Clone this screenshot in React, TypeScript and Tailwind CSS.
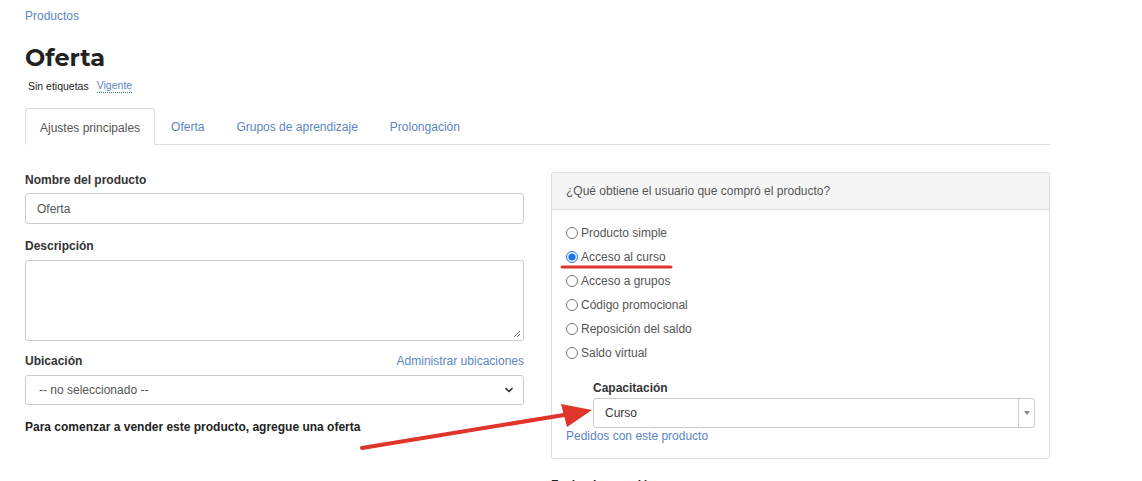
import { ChevronDown } from "lucide-react";

const options = [
  "Producto simple",
  "Acceso al curso",
  "Acceso a grupos",
  "Código promocional",
  "Reposición del saldo",
  "Saldo virtual",
];

const tabs = ["Ajustes principales", "Oferta", "Grupos de aprendizaje", "Prolongación"];

export default function App() {
  return (
    <div className="relative h-[481px] w-[1142px] overflow-hidden bg-white font-['Liberation_Sans',Arial,sans-serif] text-[12px] text-[#333]">
      <div className="w-[1050px] pl-[25px]">
        {/* Header */}
        <div className="pt-[8px] text-[12px] leading-[16px] text-[#5b86c5]">Productos</div>
        <h1 className="mt-[19px] font-['Montserrat','Lato',sans-serif] text-[24px] font-bold leading-[30px] text-[#222]">Oferta</h1>
        <div className="mt-[5px] flex items-center gap-[8px] pl-[3px] text-[10.5px] leading-[14px]">
          <span className="text-[#222]">Sin etiquetas</span>
          <span className="border-b border-dotted border-[#2a6fc9] text-[#5b86c5]">Vigente</span>
        </div>

        {/* Tabs */}
        <div className="mt-[15px] flex h-[37px] border-b border-[#ddd] text-[12px]">
          {tabs.map((t, i) => (
            <div
              key={t}
              className={
                i === 0
                  ? "-mb-px flex items-center rounded-t-[3px] border border-b-white border-[#ddd] bg-white px-[14px] pt-[2px] text-[#555]"
                  : "flex items-center px-[16px] pt-[2px] text-[#5b86c5]"
              }
            >
              {t}
            </div>
          ))}
        </div>

        <div className="mt-[27px] grid grid-cols-[499px_499px] gap-[27px]">
          {/* Left column */}
          <div className="flex flex-col">
            <label className="font-bold leading-[16px] text-[#333]">Nombre del producto</label>
            <div className="mt-[5px] flex h-[31px] items-center rounded-[3px] border border-[#ccc] px-[11px] text-[#555]">Oferta</div>

            <label className="mt-[14px] font-bold leading-[16px]">Descripción</label>
            <div className="relative mt-[6px] h-[81px] rounded-[3px] border border-[#ccc]">
              <svg className="absolute bottom-[2px] right-[2px]" width="8" height="8" viewBox="0 0 8 8">
                <path d="M1 7 L7 1 M4 7 L7 4" stroke="#777" strokeWidth="1" />
              </svg>
            </div>

            <div className="mt-[12px] flex items-center justify-between leading-[16px]">
              <span className="font-bold">Ubicación</span>
              <span className="text-[#5b86c5]">Administrar ubicaciones</span>
            </div>
            <div className="mt-[6px] flex h-[30px] items-center justify-between rounded-[3px] border border-[#ccc] pl-[13px] pr-[8px] text-[#555]">
              <span>-- no seleccionado --</span>
              <ChevronDown className="h-[12px] w-[12px] text-[#333]" strokeWidth={3.5} />
            </div>

            <div className="mt-[14px] font-bold leading-[16px] text-[#222]">Para comenzar a vender este producto, agregue una oferta</div>
          </div>

          {/* Right column */}
          <div className="flex flex-col">
            <div className="rounded-[2px] border border-[#ddd]">
              <div className="flex h-[37px] items-center border-b border-[#ddd] bg-[#f5f5f5] px-[14px] text-[#555]">
                ¿Qué obtiene el usuario que compró el producto?
              </div>
              <div className="px-[14px] pb-[14px] pt-[11px]">
                <div className="flex flex-col">
                  {options.map((o, i) => (
                    <label key={o} className="flex h-[24px] items-center gap-[3px] text-[#555]">
                      <input type="radio" name="tipo" defaultChecked={i === 1} className="m-0 h-[12px] w-[12px] accent-[#1a73e8]" />
                      <span>{o}</span>
                    </label>
                  ))}
                </div>
                <div className="mt-[15px] pl-[27px]">
                  <div className="font-bold leading-[16px] text-[#333]">Capacitación</div>
                  <div className="mt-[2px] flex h-[30px] items-stretch rounded-[3px] border border-[#ccc]">
                    <div className="flex flex-1 items-center px-[11px] text-[#333]">Curso</div>
                    <div className="flex w-[16px] items-center justify-center border-l border-[#ccc]">
                      <svg width="6" height="4" viewBox="0 0 6 4"><path d="M0 0 H6 L3 4 Z" fill="#888" /></svg>
                    </div>
                  </div>
                </div>
                <div className="leading-[16px] text-[#5b86c5]">Pedidos con este producto</div>
              </div>
            </div>
            <div className="mt-[18px] font-bold leading-[16px] text-[#222]">Fecha de creación</div>
          </div>
        </div>
      </div>

      {/* Red annotation overlay */}
      <svg className="pointer-events-none absolute left-0 top-0" width="1142" height="481">
        <line x1="562" y1="267" x2="671" y2="267" stroke="#e0352b" strokeWidth="3" strokeLinecap="round" />
        <line x1="362" y1="448" x2="570" y2="414" stroke="#e0352b" strokeWidth="4" strokeLinecap="round" />
        <path d="M592 410 L561 404 L567 427 Z" fill="#e0352b" />
      </svg>
    </div>
  );
}
